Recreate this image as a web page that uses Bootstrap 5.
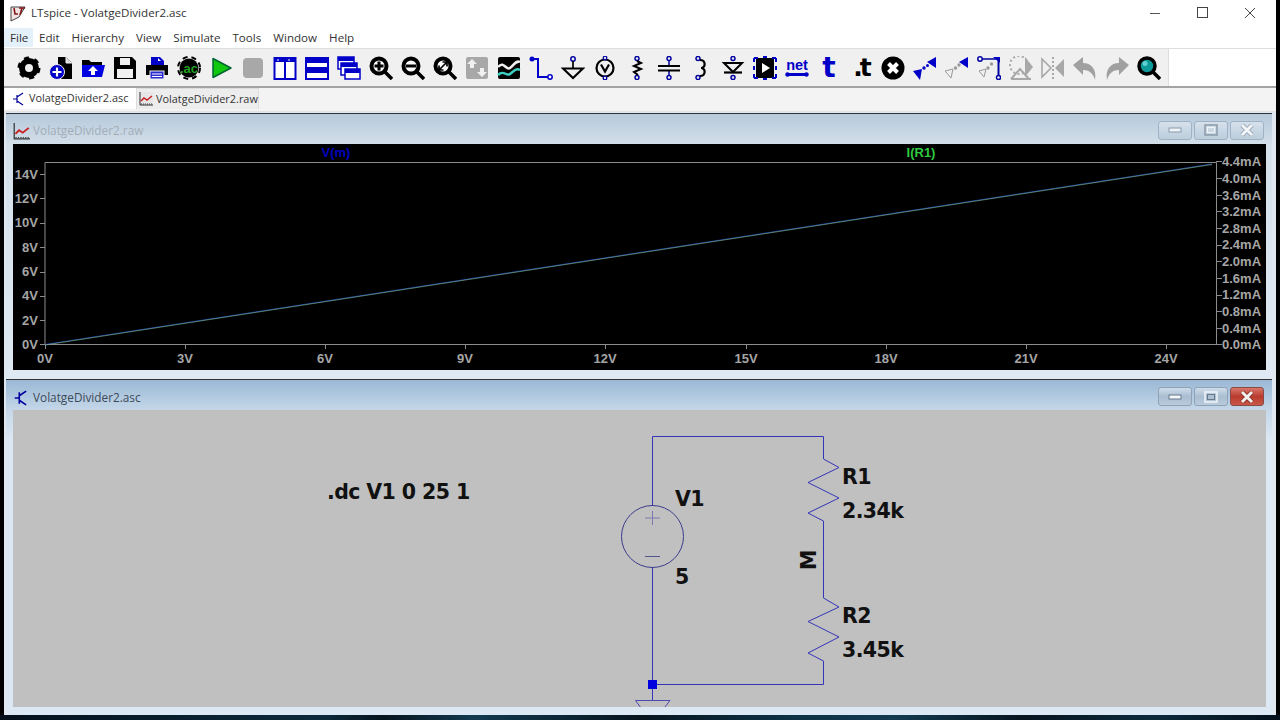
<!DOCTYPE html>
<html lang="en">
<head>
<meta charset="utf-8">
<title>LTspice</title>
<link href="https://cdn.jsdelivr.net/npm/bootstrap@5.3.0/dist/css/bootstrap.min.css" rel="stylesheet">
<style>
html,body{height:720px;overflow:hidden}
body{background:#000;font-family:"Open Sans","Liberation Sans",sans-serif;font-size:12px;color:#222;width:1280px}
.app{margin:0 4px;height:715px;background:#f0f0f0}
.titlebar{height:28px;background:#fff;padding-left:5px}
.titlebar .ttl{font-size:11.6px;margin:-2px 0 0 4px;color:#333}
.sysbtns{padding-right:2px}
.sysbtn{width:47.5px;height:24px;display:flex;align-items:center;justify-content:center;margin-top:-2px}
.menubar{height:20px;background:#fff}
.menubar .nav-link{color:#333;font-size:11.6px;padding:0 6px;height:19px;line-height:19px}
.menubar .nav-link.on{background:#e4f1fb;padding:0 5px 0 6px;width:29px}
.toolbar{height:40px;border-top:1px solid #ddd;border-bottom:2px solid #a3a3a3;background:#f0f0f0}
.tools{width:1165px;height:37px;padding-left:13px;gap:8px;border-right:1px solid #ddd}
.tools svg{width:24px;height:24px;flex:none;margin-top:1px}
.tools .gl{width:24px;height:24px;flex:none;margin-top:1px;text-align:center;font:bold 28px/24px "DejaVu Sans",sans-serif}
.tools .gl.b{color:#0000c8}
.tools .gl.k{color:#000;letter-spacing:-3px;font-size:25px}
.rest{background:#fff}
.tabs{height:24px;padding:0 0 1px 1px;background:#f3f3f3;border-bottom:1px solid #e2e2e2}
.tabx{height:21px;font-size:10.9px;color:#333;padding:0 4px 0 7px;gap:4px}
.tabx svg{flex:none}
.tabx.on{background:#fff;width:131px}
.tabx.off{background:#ededed;border:1px solid #ddd;border-bottom:0;width:123px;padding-left:2px;gap:3px}
.mdi{padding:0 0 0 2px;background:#dfe8f1}
.win{width:1266px;border-top:1px solid #333;padding:0 6px 6px 7px}
.win.a{height:266px;margin-top:1px;background:linear-gradient(#b6c9da 0,#d4e0ea 31px,#dfe9f3 100%)}
.win.b{height:336px;background:linear-gradient(#9ab8d5 0,#c6d8e9 31px,#dce8f4 60px,#dce8f4 100%)}
.wt{height:30px;font-size:11.8px;padding-top:4px}
.win.b .wt{padding-top:5px}
.win.a .wt{color:#a3adb8}
.win.b .wt{color:#3c4a58}
.wt .name{margin-left:3px}
.win.b .wt .name{margin-left:4px}
.wt .grp{margin-top:-2px;margin-right:2px;gap:2px}
.wbtn{width:34px;height:19px;border:1px solid #8ea3b8;border-radius:3px;background:linear-gradient(#cfdcea,#aabed2 50%,#b9cadb);padding:0;display:flex;align-items:center;justify-content:center}
.win.a .wbtn{background:linear-gradient(#d6e1ec,#bccddc);border-color:#9fb2c5}
.wbtn.x{background:linear-gradient(#d9776a,#b93c2e 50%,#c9574a);border-color:#8a4a44}
.win.a .wbtn.x{background:linear-gradient(#d6e1ec,#bccddc);border-color:#9fb2c5}
.plot,.sch{display:block;width:1253px}
.plot{height:226px;background:#000}
.sch{height:297px;background:#c0c0c0}
.plot text{font:bold 13px "Liberation Sans",sans-serif;fill:#a6a6a6}
.sch text{font:bold 20.5px "DejaVu Sans",sans-serif;letter-spacing:-.6px;fill:#111}
.desk{height:5px;background:linear-gradient(90deg,#04101c,#0c2a3c 25%,#06141f 30%,#123a50 37%,#06141f 50%,#0d3245 62%,#123a50 70%,#06141f 80%,#0c2a3c 90%,#04101c)}
</style>
</head>
<body>
<div class="app d-flex flex-column">
  <div class="titlebar d-flex align-items-center">
    <svg width="18" height="18" viewBox="0 0 18 18"><path d="M2 2h14l-6 10-8 4z" fill="#f3e4e4" stroke="#444"/><path d="M5 3l1 6h3M10 3h6M13 3l-2 7" fill="none" stroke="#801818" stroke-width="1.600"/></svg>
    <span class="ttl">LTspice - VolatgeDivider2.asc</span>
    <div class="ms-auto d-flex sysbtns">
      <div class="sysbtn"><svg width="12" height="12"><path d="M1 6.500h10" stroke="#555"/></svg></div>
      <div class="sysbtn"><svg width="12" height="12"><rect x=".5" y=".5" width="10" height="10" fill="none" stroke="#444"/></svg></div>
      <div class="sysbtn"><svg width="12" height="12"><path d="M1 1l10 10M11 1L1 11" stroke="#444"/></svg></div>
    </div>
  </div>
  <nav class="menubar nav">
    <a class="nav-link on" href="#">File</a><a class="nav-link" href="#">Edit</a><a class="nav-link" href="#">Hierarchy</a><a class="nav-link" href="#">View</a><a class="nav-link" href="#">Simulate</a><a class="nav-link" href="#">Tools</a><a class="nav-link" href="#">Window</a><a class="nav-link" href="#">Help</a>
  </nav>
  <div class="toolbar d-flex">
    <div class="tools d-flex align-items-center">
      <svg viewBox="0 0 24 24"><circle cx="12" cy="12" r="7" fill="none" stroke="#000" stroke-width="6"/><circle cx="12" cy="12" r="10" fill="none" stroke="#000" stroke-width="3" stroke-dasharray="5 5.470"/></svg>
      <svg viewBox="0 0 24 24"><path d="M9 1h8l6 6v16H9z" fill="#000"/><path d="M17 1v6h6" fill="#ddd" stroke="#f0f0f0"/><circle cx="8" cy="16" r="7.500" fill="#0000c8" stroke="#f0f0f0"/><path d="M8 11.500v9M3.500 16h9" stroke="#fff" stroke-width="2.200"/></svg>
      <svg viewBox="0 0 24 24"><path d="M1 4h7l2 2h11v4H1z" fill="#000"/><path d="M1 21V9h23l-3 12z" fill="#0000e0"/><path d="M12 10l5 5h-3v4h-4v-4H7z" fill="#fff"/></svg>
      <svg viewBox="0 0 24 24"><path d="M1 1h18l4 4v18H1z" fill="#000"/><rect x="7" y="2" width="10" height="7" fill="#f0f0f0"/><rect x="4" y="13" width="16" height="9" fill="#f0f0f0"/></svg>
      <svg viewBox="0 0 24 24"><path d="M6 1h9l4 4v5H6z" fill="#0000c8"/><path d="M13 2l3 3h-3z" fill="#fff"/><path d="M1 9h22v10H1z" fill="#000"/><rect x="5" y="15" width="14" height="8" fill="#2a2ad0" stroke="#f0f0f0"/><path d="M7 18h10M7 20.500h10" stroke="#fff"/></svg>
      <svg viewBox="0 0 24 24"><circle cx="12" cy="12" r="9.500" fill="#000"/><circle cx="12" cy="12" r="11" fill="none" stroke="#000" stroke-width="2" stroke-dasharray="5 4"/><text x="12" y="16.500" text-anchor="middle" font-family="Liberation Sans" font-weight="700" font-size="13" fill="#20a020">.ac</text></svg>
      <svg viewBox="0 0 24 24"><path d="M4 2.500L22 12 4 21.500z" fill="#10c810" stroke="#063" stroke-width="1.500" stroke-linejoin="round"/></svg>
      <svg viewBox="0 0 24 24"><rect x="2" y="2" width="20" height="20" rx="4" fill="#a8a8a8"/></svg>
      <svg viewBox="0 0 24 24"><path d="M1.500 2h21v21h-21zM12 2v21" fill="#fff" stroke="#0000c8" stroke-width="2"/><rect x="1.500" y="2" width="21" height="4" fill="#0000c8"/><path d="M5 3v2M16 3v2" stroke="#fff"/></svg>
      <svg viewBox="0 0 24 24"><path d="M1 2h22v21H1z" fill="#fff" stroke="#0000c8" stroke-width="2"/><rect x="1" y="2" width="22" height="5" fill="#0000c8"/><rect x="1" y="11" width="22" height="6" fill="#0000c8"/></svg>
      <svg viewBox="0 0 24 24"><path d="M1 1h16v12H1z" fill="#fff" stroke="#0000c8" stroke-width="1.500"/><rect x="1" y="1" width="16" height="4" fill="#0000c8"/><path d="M4 7h16v12H4z" fill="#fff" stroke="#0000c8" stroke-width="1.500"/><rect x="4" y="7" width="16" height="4" fill="#0000c8"/><path d="M8 13h15v10H8z" fill="#fff" stroke="#0000c8" stroke-width="1.500"/><rect x="8" y="13" width="15" height="4" fill="#0000c8"/></svg>
      <svg viewBox="0 0 24 24"><circle cx="10" cy="10" r="7.500" fill="#fff" stroke="#000" stroke-width="4"/><path d="M16 16l7 7" stroke="#000" stroke-width="3.500"/><path d="M5.500 10h9M10 5.500v9" stroke="#000" stroke-width="3"/></svg>
      <svg viewBox="0 0 24 24"><circle cx="10" cy="10" r="7.500" fill="#fff" stroke="#000" stroke-width="4"/><path d="M16 16l7 7" stroke="#000" stroke-width="3.500"/><path d="M5 10h10" stroke="#000" stroke-width="3"/></svg>
      <svg viewBox="0 0 24 24"><circle cx="10" cy="10" r="7.500" fill="#fff" stroke="#000" stroke-width="4"/><path d="M16 16l7 7" stroke="#000" stroke-width="3.500"/><path d="M6.500 13.500l7-7M9.500 6h4.500v4.500M6 9.500V14h4.500" fill="none" stroke="#000" stroke-width="1.700"/></svg>
      <svg viewBox="0 0 24 24"><rect x="1" y="1" width="22" height="22" rx="2" fill="#a8a8a8"/><path d="M7 3l5 5H9v4H5V8H2zM17 21l-5-5h3v-4h4v4h3z" fill="#f0f0f0"/></svg>
      <svg viewBox="0 0 24 24"><rect x="1" y="1" width="22" height="22" rx="2" fill="#000"/><path d="M1 11c6-7 8 4 12 1s6-8 10-6" fill="none" stroke="#eee" stroke-width="2.500"/><path d="M1 19c6-6 8 2 12-1s6-6 10-4" fill="none" stroke="#3ccfc4" stroke-width="2.500"/></svg>
      <svg viewBox="0 0 24 24"><circle cx="3" cy="3" r="2.500" fill="#0000c8"/><path d="M4 3h5v18h10" fill="none" stroke="#0000c8" stroke-width="2"/><circle cx="21" cy="21" r="2.200" fill="#fff" stroke="#0000c8" stroke-width="1.500"/></svg>
      <svg viewBox="0 0 24 24"><circle cx="12" cy="3" r="2.200" fill="#f0f0f0" stroke="#0000a0" stroke-width="1.500"/><path d="M12 5v7" stroke="#000" stroke-width="1.700"/><path d="M2 12.500h20L12 22z" fill="#f0f0f0" stroke="#000" stroke-width="2.200"/></svg>
      <svg viewBox="0 0 24 24"><circle cx="12" cy="12" r="8.500" fill="#f0f0f0" stroke="#000" stroke-width="2.200"/><path d="M8 8.500l4 7 4-7" fill="none" stroke="#000" stroke-width="2.200"/><circle cx="12" cy="2" r="1.800" fill="#f0f0f0" stroke="#0000a0" stroke-width="1.300"/><circle cx="12" cy="22" r="1.800" fill="#f0f0f0" stroke="#0000a0" stroke-width="1.300"/></svg>
      <svg viewBox="0 0 24 24"><circle cx="12" cy="2.500" r="2" fill="#f0f0f0" stroke="#0000a0" stroke-width="1.500"/><circle cx="12" cy="21.500" r="2" fill="#f0f0f0" stroke="#0000a0" stroke-width="1.500"/><path d="M12 5l4 2-7 3 7 3-7 3 4 3" fill="none" stroke="#000" stroke-width="2"/></svg>
      <svg viewBox="0 0 24 24"><circle cx="12" cy="2.500" r="2" fill="#f0f0f0" stroke="#0000a0" stroke-width="1.500"/><circle cx="12" cy="21.500" r="2" fill="#f0f0f0" stroke="#0000a0" stroke-width="1.500"/><path d="M12 5v4M12 15v4" stroke="#0000a0" stroke-width="1.500"/><path d="M1 10h22M1 14.500h22" stroke="#000" stroke-width="2.200"/></svg>
      <svg viewBox="0 0 24 24"><circle cx="9" cy="2.500" r="2" fill="#f0f0f0" stroke="#0000a0" stroke-width="1.500"/><circle cx="9" cy="21.500" r="2" fill="#f0f0f0" stroke="#0000a0" stroke-width="1.500"/><path d="M11 4c6 0 6 8 1 8 5 0 5 8-1 8" fill="none" stroke="#000" stroke-width="2.200"/></svg>
      <svg viewBox="0 0 24 24"><circle cx="12" cy="2.500" r="2" fill="#f0f0f0" stroke="#0000a0" stroke-width="1.500"/><circle cx="12" cy="21.500" r="2" fill="#f0f0f0" stroke="#0000a0" stroke-width="1.500"/><path d="M3 7h18l-9 9z" fill="#f0f0f0" stroke="#000" stroke-width="2"/><path d="M3 16.500h18" stroke="#000" stroke-width="2.200"/></svg>
      <svg viewBox="0 0 24 24"><rect x="3" y="2" width="18" height="20" fill="#000"/><path d="M9 7l8 5-8 5z" fill="#fff"/><path d="M1 2h4M10 1h4M19 2h4M1 22h4M10 23h4M19 22h4M1 2v4M23 2v4M1 10v4M23 10v4M1 18v4M23 18v4" stroke="#0000c8" stroke-width="2"/></svg>
      <svg viewBox="0 0 24 24"><text x="12" y="14" text-anchor="middle" font-family="Liberation Sans" font-weight="700" font-size="14.500" fill="#0000c8">net</text><path d="M2 18.500h20" stroke="#0000c8" stroke-width="3"/><circle cx="2.500" cy="18.500" r="2.200" fill="#0000c8"/><circle cx="21.500" cy="18.500" r="2.200" fill="#0000c8"/></svg>
      <span class="gl b">t</span>
      <span class="gl k">.t</span>
      <svg viewBox="0 0 24 24"><circle cx="12" cy="12" r="11.500" fill="#000"/><path d="M7.500 7.500l9 9M16.500 7.500l-9 9" stroke="#fff" stroke-width="4"/></svg>
      <svg viewBox="0 0 24 24"><path d="M14 6L23 1v11z" fill="#0000c8"/><path d="M0 15l9-2-2 11z" fill="#0000c8"/><circle cx="11" cy="12" r="1.700" fill="#0000c8"/><circle cx="14.500" cy="9.500" r="1.500" fill="#0000c8"/></svg>
      <svg viewBox="0 0 24 24"><path d="M14 6L23 1v11z" fill="#0000c8"/><path d="M0 15l8-2-2 9z" fill="#f0f0f0" stroke="#999"/><circle cx="10.500" cy="12" r="1.700" fill="#999"/><circle cx="14" cy="9" r="1.700" fill="#999"/></svg>
      <svg viewBox="0 0 24 24"><circle cx="3" cy="3" r="2.200" fill="#fff" stroke="#0000a0" stroke-width="1.500"/><path d="M5 3h15" stroke="#0000a0" stroke-width="1.500"/><path d="M16 1h7v6z" fill="#0000c8"/><path d="M21.500 3v17" stroke="#0000a0" stroke-width="2"/><circle cx="21.500" cy="21.500" r="2" fill="#fff" stroke="#0000a0" stroke-width="1.500"/><path d="M2 15l7-2-2 8z" fill="#f0f0f0" stroke="#999"/><circle cx="11" cy="12" r="1.700" fill="#999"/><circle cx="14.500" cy="8" r="1.700" fill="#999"/></svg>
      <svg viewBox="0 0 24 24"><path d="M16 1l8 10-8 10z" fill="#a8a8a8"/><path d="M2 23h20M2 23l9-10 9 10" fill="none" stroke="#a8a8a8" stroke-width="2"/><circle cx="12" cy="10" r="9" fill="none" stroke="#a8a8a8" stroke-width="2" stroke-dasharray="2 2.500" transform="translate(-2 -1)"/></svg>
      <svg viewBox="0 0 24 24"><path d="M1 3l9 9-9 9z" fill="#f0f0f0" stroke="#a8a8a8" stroke-width="1.600"/><path d="M23 3l-9 9 9 9z" fill="#a8a8a8"/><path d="M12 1v22" stroke="#a8a8a8" stroke-width="2" stroke-dasharray="2 2"/></svg>
      <svg viewBox="0 0 24 24"><path d="M0 9L10 1v6c8 0 14 6 12 17-2-7-6-10-12-10v5z" fill="#a0a0a0"/></svg>
      <svg viewBox="0 0 24 24"><path d="M24 9L14 1v6C6 7 0 13 2 24c2-7 6-10 12-10v5z" fill="#a0a0a0"/></svg>
      <svg viewBox="0 0 24 24"><circle cx="10" cy="10" r="8" fill="#0f9a9a" stroke="#000" stroke-width="3.500"/><path d="M16 16l7 7" stroke="#000" stroke-width="3.500"/><circle cx="8" cy="7.500" r="2.500" fill="#5fd0d0"/></svg>
    </div>
    <div class="rest flex-grow-1"></div>
  </div>
  <div class="tabs d-flex">
    <div class="tabx on d-flex align-items-center">
      <svg width="13" height="14" viewBox="0 0 13 14"><path d="M1 7h4M5 3v8M5 5l6-4M5 9l6 4" fill="none" stroke="#000096" stroke-width="1.200"/></svg>
      <span>VolatgeDivider2.asc</span>
    </div>
    <div class="tabx off d-flex align-items-center">
      <svg width="14" height="14" viewBox="0 0 14 14"><rect width="14" height="14" fill="#e6e6e6"/><path d="M1 0v13h13" fill="none" stroke="#333"/><path d="M2 9l3-3 3 2 5-4" fill="none" stroke="#c82020" stroke-width="1.500"/><path d="M2 12h11" stroke="#444" stroke-dasharray="1 1"/></svg>
      <span>VolatgeDivider2.raw</span>
    </div>
  </div>
  <div class="mdi flex-grow-1">
    <section class="win a">
      <div class="wt d-flex align-items-center">
        <svg width="17" height="17" viewBox="0 0 14 14"><path d="M1 0v13h13" fill="none" stroke="#333"/><path d="M2 9l3-3 3 2 5-4" fill="none" stroke="#c82020" stroke-width="1.500"/><path d="M2 12h11" stroke="#444" stroke-dasharray="1 1"/></svg>
        <span class="name">VolatgeDivider2.raw</span>
        <div class="ms-auto d-flex grp">
          <button class="btn wbtn" aria-label="Minimize"><svg width="14" height="8"><rect x="1" y="2" width="12" height="4" fill="#eef3f8" stroke="#8a99a8"/></svg></button>
          <button class="btn wbtn" aria-label="Maximize"><svg width="14" height="12"><rect x="1" y="1" width="12" height="10" fill="none" stroke="#8a99a8" stroke-width="1.500"/><rect x="3.500" y="3.500" width="7" height="5" fill="none" stroke="#eef3f8"/></svg></button>
          <button class="btn wbtn x" aria-label="Close"><svg width="16" height="14"><path d="M3 2l10 10M13 2L3 12" stroke="#8a99a8" stroke-width="4.500"/><path d="M3 2l10 10M13 2L3 12" stroke="#f4f7fa" stroke-width="3"/></svg></button>
        </div>
      </div>
      <svg class="plot" viewBox="13 144 1253 226">
        <text x="336" y="157" text-anchor="middle" style="fill:#0000c0">V(m)</text>
        <text x="921" y="157" text-anchor="middle" style="fill:#2ecc40">I(R1)</text>
        <path d="M45 162.500H1216.500V344.500H45z" fill="none" stroke="#8c8c8c"/>
        <g stroke="#8c8c8c">
          <path d="M40 174.500h5M40 198.500h5M40 223.500h5M40 247.500h5M40 272.500h5M40 296.500h5M40 320.500h5M40 344.500h5"/>
          <path d="M1216 161.500h6M1216 178.500h6M1216 195.500h6M1216 211.500h6M1216 228.500h6M1216 245.500h6M1216 261.500h6M1216 278.500h6M1216 295.500h6M1216 311.500h6M1216 328.500h6M1216 344.500h6"/>
          <path d="M45.500 344v5M185.500 344v5M325.500 344v5M465.500 344v5M605.500 344v5M746.500 344v5M886.500 344v5M1026.500 344v5M1166.500 344v5"/>
        </g>
        <path d="M45 344.500L1212 164" stroke="#1f4fc8" stroke-width=".8" fill="none"/>
        <path d="M45 345L1212 164.500" stroke="#8cc08c" stroke-width=".6" fill="none"/>
        <g text-anchor="end">
          <text x="38" y="179">14V</text><text x="38" y="203">12V</text><text x="38" y="227">10V</text><text x="38" y="252">8V</text><text x="38" y="276">6V</text><text x="38" y="300">4V</text><text x="38" y="325">2V</text><text x="38" y="349">0V</text>
        </g>
        <g text-anchor="start">
          <text x="1222" y="166">4.4mA</text><text x="1222" y="183">4.0mA</text><text x="1222" y="200">3.6mA</text><text x="1222" y="216">3.2mA</text><text x="1222" y="233">2.8mA</text><text x="1222" y="249">2.4mA</text><text x="1222" y="266">2.0mA</text><text x="1222" y="283">1.6mA</text><text x="1222" y="299">1.2mA</text><text x="1222" y="316">0.8mA</text><text x="1222" y="333">0.4mA</text><text x="1222" y="349">0.0mA</text>
        </g>
        <g text-anchor="middle">
          <text x="45" y="363">0V</text><text x="185" y="363">3V</text><text x="325" y="363">6V</text><text x="465" y="363">9V</text><text x="605" y="363">12V</text><text x="746" y="363">15V</text><text x="886" y="363">18V</text><text x="1026" y="363">21V</text><text x="1166" y="363">24V</text>
        </g>
      </svg>
    </section>
    <section class="win b">
      <div class="wt d-flex align-items-center">
        <svg width="16" height="16" viewBox="0 0 13 14"><path d="M1 7h4M5 2v10M5 5l6-4M5 9l6 4" fill="none" stroke="#0000a0" stroke-width="1.400"/></svg>
        <span class="name">VolatgeDivider2.asc</span>
        <div class="ms-auto d-flex grp">
          <button class="btn wbtn" aria-label="Minimize"><svg width="14" height="8"><rect x="1" y="2" width="12" height="4" fill="#f4f7fa" stroke="#66788a"/></svg></button>
          <button class="btn wbtn" aria-label="Maximize"><svg width="14" height="12"><rect x="1" y="1" width="12" height="10" fill="none" stroke="#f0f4f8" stroke-width="1.500"/><rect x="3.500" y="3.500" width="7" height="5" fill="none" stroke="#66788a"/></svg></button>
          <button class="btn wbtn x" aria-label="Close"><svg width="16" height="14"><path d="M3 2l10 10M13 2L3 12" stroke="#7a2a22" stroke-width="4.500"/><path d="M3 2l10 10M13 2L3 12" stroke="#f4f0ee" stroke-width="3"/></svg></button>
        </div>
      </div>
      <svg class="sch" viewBox="13 410 1253 297">
        <g fill="none" stroke="#3535b8" stroke-width="1">
          <path d="M652.500 506V436.500H823.500V459L839 467.500 808 482.500 839 498 808 513 823.500 521V598L839 607 808 621.500 839 637 808 653 823.500 661V684.500H652.500M652.500 567V700"/>
          <path d="M635.500 700.500H670L661 712H644z" stroke="#4a4ab0"/>
        </g>
        <rect x="648" y="680" width="9" height="9" fill="#0000e0"/>
        <g fill="none" stroke="#3c3c8c">
          <circle cx="652.500" cy="536.500" r="31"/>
          <path d="M645 518h15M652.500 511v14" stroke="#7a7ab0"/>
          <path d="M645 556.500h15" stroke="#54548c"/>
        </g>
        <text x="675" y="506">V1</text>
        <text x="675" y="584">5</text>
        <text x="842" y="484">R1</text>
        <text x="842" y="518">2.34k</text>
        <text x="842" y="623">R2</text>
        <text x="842" y="657">3.45k</text>
        <text x="327" y="499">.dc V1 0 25 1</text>
        <text transform="translate(816 560) rotate(-90)" text-anchor="middle">M</text>
      </svg>
    </section>
  </div>
</div>
<div class="desk"></div>
</body>
</html>
